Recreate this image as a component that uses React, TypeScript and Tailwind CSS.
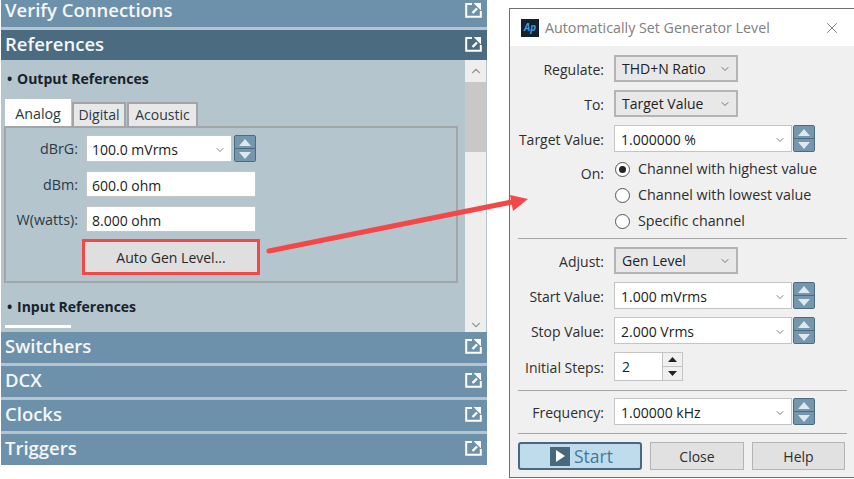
import { ChevronDown, ChevronUp, X } from "lucide-react"
import type { ReactNode } from "react"

const font = { fontFamily: '"Open Sans", "Noto Sans", sans-serif' }

function PopOut() {
  return (
    <svg width="17" height="16" viewBox="0 0 17 16" className="shrink-0">
      <path d="M7 2H1.2V14.8H15.8V9" fill="none" stroke="#fff" strokeWidth="2" />
      <path d="M7.5 11L12 6.5" stroke="#fff" strokeWidth="2.4" />
      <path d="M8.5 1H16V8.5Z" fill="#fff" />
    </svg>
  )
}

function Header({ title, h, active }: { title: string; h: string; active?: boolean }) {
  return (
    <div
      className={`${h} ${active ? "bg-[#4a6b80]" : "bg-[#6d91aa]"} flex shrink-0 items-center justify-between pl-[4px] pr-[5px] text-[18.5px] leading-[20px] font-semibold text-[#f4f6f7]`}
    >
      <span>{title}</span>
      <PopOut />
    </div>
  )
}

function Spinner() {
  return (
    <div className="flex h-[27px] w-[22px] shrink-0 flex-col rounded-[2px] border border-[#4a6b80] bg-[#4a6b80] gap-[1px]">
      <div className="flex flex-1 items-center justify-center bg-[#7497ae]">
        <svg width="12" height="7" viewBox="0 0 12 7"><path d="M6 0L12 7H0Z" fill="#dfe8ed" /></svg>
      </div>
      <div className="flex flex-1 items-center justify-center bg-[#7497ae]">
        <svg width="12" height="7" viewBox="0 0 12 7"><path d="M0 0H12L6 7Z" fill="#dfe8ed" /></svg>
      </div>
    </div>
  )
}

function Field({ value, arrow, w, h = "h-[27px]", pl = "pl-[6px]" }: { value: string; arrow?: boolean; w: string; h?: string; pl?: string }) {
  return (
    <div className={`${w} ${h} ${pl} flex items-center justify-between border border-[#c4c4c4] bg-white pt-[2px] pr-[5px] text-[#222]`}>
      <span>{value}</span>
      {arrow && <ChevronDown size={12} strokeWidth={1.6} className="text-[#666]" />}
    </div>
  )
}

function Select({ value }: { value: string }) {
  return (
    <div className="flex h-[27px] w-[124px] items-center justify-between border-2 border-[#b4b4b4] bg-[#e8e8e8] pl-[6px] pr-[5px] text-[#222]">
      <span>{value}</span>
      <ChevronDown size={12} strokeWidth={1.6} className="text-[#555]" />
    </div>
  )
}

function Row({ label, mt, children }: { label: string; mt: string; children: ReactNode }) {
  return (
    <div className={`${mt} flex items-center`}>
      <div className="w-[94px] shrink-0 whitespace-nowrap pt-[1px] text-right text-[#2e2e2e]">{label}</div>
      <div className="ml-[10px] flex items-center gap-[1px]">{children}</div>
    </div>
  )
}

function Radio({ label, checked }: { label: string; checked?: boolean }) {
  return (
    <div className="flex h-[26px] items-center">
      <div className="flex h-[15px] w-[15px] items-center justify-center rounded-full border border-[#555] bg-white">
        {checked && <div className="h-[7px] w-[7px] rounded-full bg-[#222]" />}
      </div>
      <span className="ml-[8px] text-[14.3px] text-[#2e2e2e]">{label}</span>
    </div>
  )
}

function Sep({ mt }: { mt: string }) {
  return <div className={`${mt} ml-[8px] mr-[8px] h-[1px] bg-[#a6a6a6]`} />
}

function LeftRow({ label, children, mt }: { label: string; children: ReactNode; mt: string }) {
  return (
    <div className={`${mt} flex items-center`}>
      <div className="w-[72px] shrink-0 whitespace-nowrap pt-[1px] text-right text-[14.3px] text-[#2a3a44]">{label}</div>
      <div className="ml-[8px] flex items-center gap-[2px]">{children}</div>
    </div>
  )
}

function Bold({ text, pt }: { text: string; pt: string }) {
  return (
    <div className={`${pt} flex pl-[3px] text-[14px] font-bold text-[#17232a]`}>
      <span className="w-[10px]">•</span>
      <span>{text}</span>
    </div>
  )
}

export default function App() {
  return (
    <div className="relative flex h-[479px] w-[854px] overflow-hidden bg-white text-[14px]" style={font}>
      <div className="ml-[1px] flex h-[465px] w-[486px] shrink-0 flex-col bg-[#b5c5ce]">
        <Header title="Verify Connections" h="h-[27px] pb-[7px]" />
        <div className="h-[3px] shrink-0 bg-[#b5c5ce]" />
        <Header title="References" h="h-[30px] pb-[2px]" active />
        <div className="flex h-[272px] shrink-0">
          <div className="h-full w-[464px] overflow-hidden pl-[3px]">
            <Bold text="Output References" pt="pt-[8px]" />
            <div className="mt-[10px] flex h-[27px] items-end pl-[1px] text-[#2a3a44]">
              <div className="flex h-[27px] w-[66px] items-center justify-center bg-white pt-[2px] text-[14.3px]">Analog</div>
              <div className="ml-[1px] flex h-[24px] w-[54px] items-center justify-center border-2 border-b-0 border-[#a4a4a4] bg-[#e8e8e8] pb-[1px]">Digital</div>
              <div className="ml-[1px] flex h-[24px] w-[71px] items-center justify-center border-2 border-b-0 border-[#a4a4a4] bg-[#e8e8e8] pb-[1px]">Acoustic</div>
            </div>
            <div className="h-[157px] w-[454px] border-2 border-[#a3a6a8] pt-[7px]">
              <LeftRow label="dBrG:" mt="mt-0">
                <Field value="100.0 mVrms" arrow w="w-[146px]" pl="pl-[5px]" />
                <Spinner />
              </LeftRow>
              <LeftRow label="dBm:" mt="mt-[9px]">
                <Field value="600.0 ohm" w="w-[170px]" h="h-[26px]" pl="pl-[5px]" />
              </LeftRow>
              <LeftRow label="W(watts):" mt="mt-[9px]">
                <Field value="8.000 ohm" w="w-[170px]" h="h-[26px]" pl="pl-[5px]" />
              </LeftRow>
              <div className="ml-[76px] mt-[7px] flex h-[36px] w-[178px] items-center justify-center border-[3px] border-[#f44848] bg-[#dfdfdf] pt-[1px] text-[#2a2a2a]">
                Auto Gen Level...
              </div>
            </div>
            <Bold text="Input References" pt="pt-[13px]" />
            <div className="ml-[1px] mt-[8px] h-[3px] w-[66px] bg-white" />
          </div>
          <div className="flex h-full w-[21px] shrink-0 flex-col bg-[#eeeeee] text-[#999]">
            <div className="flex h-[22px] items-center justify-center">
              <ChevronUp size={14} strokeWidth={2} />
            </div>
            <div className="h-[70px] bg-[#c8c8c8]" />
            <div className="flex-1" />
            <div className="flex h-[14px] items-center justify-center">
              <ChevronDown size={14} strokeWidth={2} />
            </div>
          </div>
        </div>
        <Header title="Switchers" h="h-[31px] pb-[3px]" />
        <div className="h-[3px] shrink-0" />
        <Header title="DCX" h="h-[31px] pb-[3px]" />
        <div className="h-[3px] shrink-0" />
        <Header title="Clocks" h="h-[31px] pb-[3px]" />
        <div className="h-[3px] shrink-0" />
        <Header title="Triggers" h="h-[31px] pb-[3px]" />
      </div>

      <div className="ml-[22px] mt-[8px] h-[470px] w-[346px] shrink-0 border-b border-l border-t border-[#6f6f6f] bg-[#f0f0f0]">
        <div className="flex h-[37px] items-center bg-white pl-[11px] pr-[14px]">
          <div className="flex h-[18px] w-[18px] items-center justify-center bg-[#14202c] text-[10px] font-bold italic text-[#3f9bdc]">Ap</div>
          <div className="ml-[6px] text-[14.25px] text-[#808080]">Automatically Set Generator Level</div>
          <X size={18} strokeWidth={1} className="ml-auto text-[#555]" />
        </div>
        <Row label="Regulate:" mt="mt-[9px]"><Select value="THD+N Ratio" /></Row>
        <Row label="To:" mt="mt-[8px]"><Select value="Target Value" /></Row>
        <Row label="Target Value:" mt="mt-[8px]">
          <Field value="1.000000 %" arrow w="w-[178px]" />
          <Spinner />
        </Row>
        <div className="mt-[4px] flex">
          <div className="w-[94px] shrink-0 pt-[7px] text-right text-[#2e2e2e]">On:</div>
          <div className="ml-[11px] flex flex-col">
            <Radio label="Channel with highest value" checked />
            <Radio label="Channel with lowest value" />
            <Radio label="Specific channel" />
          </div>
        </div>
        <Sep mt="mt-[4px]" />
        <Row label="Adjust:" mt="mt-[8px]"><Select value="Gen Level" /></Row>
        <Row label="Start Value:" mt="mt-[8px]">
          <Field value="1.000 mVrms" arrow w="w-[178px]" />
          <Spinner />
        </Row>
        <Row label="Stop Value:" mt="mt-[8px]">
          <Field value="2.000 Vrms" arrow w="w-[178px]" />
          <Spinner />
        </Row>
        <Row label="Initial Steps:" mt="mt-[8px]">
          <div className="flex h-[29px] w-[69px] border border-[#c4c4c4] bg-white">
            <div className="flex flex-1 items-center pl-[7px] text-[#222]">2</div>
            <div className="flex w-[20px] flex-col border-l border-[#c4c4c4] bg-[#f0f0f0]">
              <div className="flex flex-1 items-center justify-center border-b border-[#c4c4c4]">
                <svg width="9" height="5" viewBox="0 0 9 5"><path d="M4.5 0L9 5H0Z" fill="#222" /></svg>
              </div>
              <div className="flex flex-1 items-center justify-center">
                <svg width="9" height="5" viewBox="0 0 9 5"><path d="M0 0H9L4.5 5Z" fill="#222" /></svg>
              </div>
            </div>
          </div>
        </Row>
        <Sep mt="mt-[9px]" />
        <Row label="Frequency:" mt="mt-[7px]">
          <Field value="1.00000 kHz" arrow w="w-[178px]" />
          <Spinner />
        </Row>
        <Sep mt="mt-[8px]" />
        <div className="mt-[8px] flex pl-[8px]">
          <div className="flex h-[28px] w-[124px] items-center justify-center gap-[4px] rounded-[3px] border-2 border-[#47687d] bg-[#bfdcec] pl-[3px]">
            <div className="flex h-[19px] w-[20px] items-center justify-center bg-[#47687d]">
              <svg width="9" height="12" viewBox="0 0 9 12"><path d="M0 0L9 6L0 12Z" fill="#fff" /></svg>
            </div>
            <span className="text-[17.5px] text-[#3f7a9c]">Start</span>
          </div>
          <div className="ml-[8px] flex h-[28px] w-[94px] items-center justify-center border border-[#b4b4b4] bg-[#e1e1e1] text-[#2e2e2e]">Close</div>
          <div className="ml-[8px] flex h-[28px] w-[93px] items-center justify-center border border-[#b4b4b4] bg-[#e1e1e1] text-[#2e2e2e]">Help</div>
        </div>
      </div>

      <svg className="absolute left-0 top-0" width="854" height="479" viewBox="0 0 854 479">
        <path d="M269 251L512 202" stroke="#f44848" strokeWidth="5" strokeLinecap="round" />
        <path d="M510 195L528 199L513 211Z" fill="#f44848" />
      </svg>
    </div>
  )
}
